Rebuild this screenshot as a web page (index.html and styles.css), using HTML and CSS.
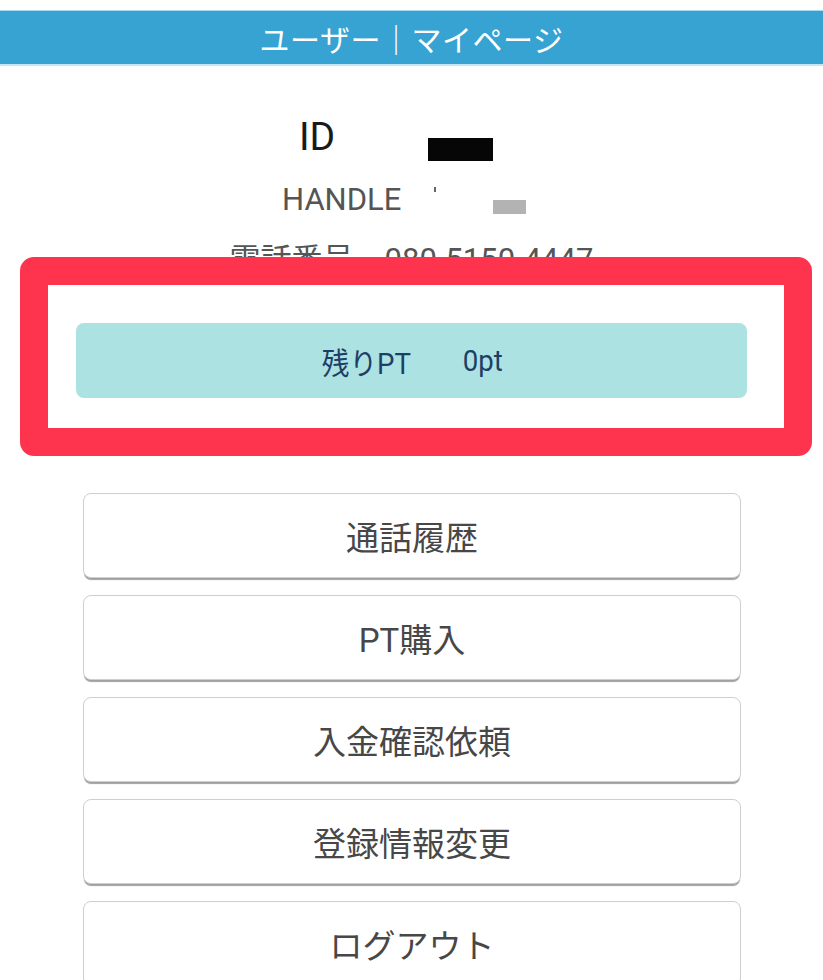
FILE: index.html
```html
<!DOCTYPE html>
<html lang="ja">
<head>
<meta charset="utf-8">
<title>ユーザー｜マイページ</title>
<link rel="stylesheet" href="styles.css">
</head>
<body>
<header class="topbar">
  <h1 class="topbar-title">ユーザー｜マイページ</h1>
</header>

<section class="profile">
  <div class="profile-row row-id">
    <span class="label-id">ID</span>
    <span class="mask-black"></span>
  </div>
  <div class="profile-row row-handle">
    <span class="label-handle">HANDLE</span>
    <span class="tick"></span>
    <span class="mask-gray"></span>
  </div>
  <div class="row-phone">電話番号　080-5150-4447</div>
</section>

<div class="highlight">
  <div class="points"><span class="points-label">残りPT</span><span class="points-value">0pt</span></div>
</div>

<nav class="menu">
  <a class="menu-btn" href="#">通話履歴</a>
  <a class="menu-btn" href="#">PT購入</a>
  <a class="menu-btn" href="#">入金確認依頼</a>
  <a class="menu-btn" href="#">登録情報変更</a>
  <a class="menu-btn" href="#">ログアウト</a>
</nav>
</body>
</html>
```

FILE: styles.css
```css
html, body {
  margin: 0;
  padding: 0;
  background: #ffffff;
}
body {
  width: 823px;
  height: 980px;
  overflow: hidden;
  font-family: Roboto, "Noto Sans CJK JP", sans-serif;
}

.topbar {
  margin-top: 10px;
  height: 53px;
  background: #36a3d3;
  border-top: 1px solid #a9d8ee;
  border-bottom: 2px solid #c4e6f5;
  display: flex;
  align-items: center;
  justify-content: center;
}
.topbar-title {
  margin: 0;
  font-weight: 400;
  font-size: 30px;
  color: #ffffff;
  letter-spacing: 0.5px;
}

.profile {
  height: 200px;
  overflow: hidden;
}
.profile-row {
  display: flex;
  align-items: flex-start;
}
.row-id {
  padding-top: 51px;
  padding-left: 299px;
  height: 65px;
}
.label-id {
  font-size: 39px;
  line-height: 40px;
  color: #1a1a1a;
}
.mask-black {
  width: 65px;
  height: 23px;
  background: #060606;
  margin-left: 93px;
  margin-top: 21px;
}
.row-handle {
  padding-left: 282px;
  height: 60px;
}
.label-handle {
  font-size: 31px;
  line-height: 36px;
  color: #555555;
}
.tick {
  width: 2px;
  height: 5px;
  background: #666;
  margin-left: 33px;
  margin-top: 5px;
}
.mask-gray {
  width: 33px;
  height: 14px;
  background: #b3b3b3;
  margin-left: 57px;
  margin-top: 18px;
}
.row-phone {
  text-align: center;
  font-size: 31px;
  line-height: 36px;
  color: #555555;
}

.highlight {
  margin: -9px 11px 0 20px;
  border: 28px solid #fe344f;
  border-radius: 14px;
  background: #ffffff;
  padding: 38px 37px 30px 28px;
  position: relative;
}
.points {
  height: 75px;
  background: #ade2e2;
  border-radius: 8px;
  display: flex;
  align-items: center;
  justify-content: center;
  gap: 46px;
  font-size: 30px;
  color: #1d3f66;
}
.points-label,
.points-value {
  display: inline-block;
  transform: scaleX(0.92);
}

.menu {
  margin: 37px 0 0 83px;
  width: 658px;
  display: flex;
  flex-direction: column;
  gap: 17px;
}
.menu-btn {
  height: 83px;
  border: 1px solid #cfcfcf;
  border-radius: 8px;
  box-shadow: 0 3px 1px -1px #a0a0a0;
  background: #ffffff;
  display: flex;
  align-items: center;
  justify-content: center;
  text-decoration: none;
  font-size: 33px;
  color: #474747;
}
```
